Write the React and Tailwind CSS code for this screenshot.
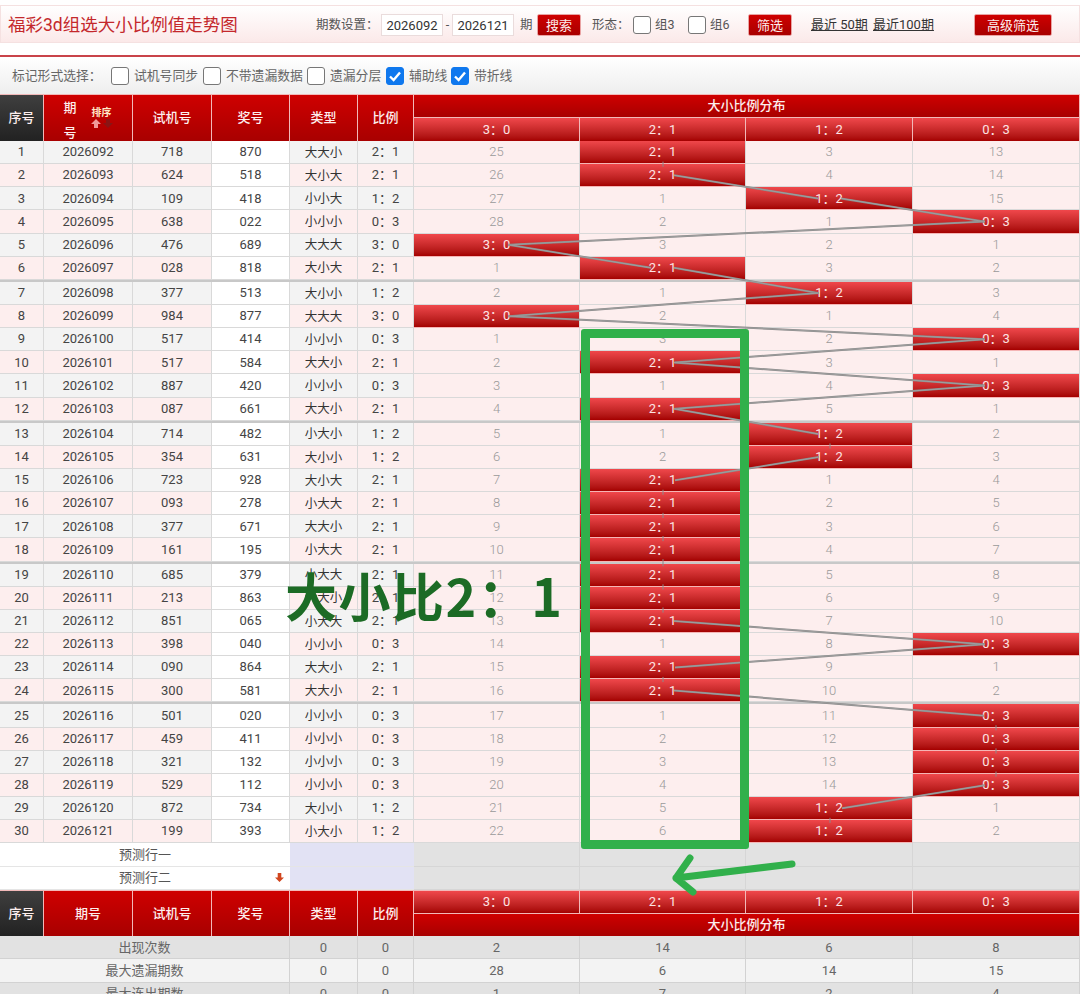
import React from "react";

const cols = "grid grid-cols-[44px_89px_79px_78px_68px_56px_166px_166px_167px_167px]";
const font = "font-['Roboto','Noto_Sans_CJK_SC',sans-serif]";

const raw = [
  ["718","870","大大小",1,[25,0,3,13]],
  ["624","518","大小大",1,[26,0,4,14]],
  ["109","418","小小大",2,[27,1,0,15]],
  ["638","022","小小小",3,[28,2,1,0]],
  ["476","689","大大大",0,[0,3,2,1]],
  ["028","818","大小大",1,[1,0,3,2]],
  ["377","513","大小小",2,[2,1,0,3]],
  ["984","877","大大大",0,[0,2,1,4]],
  ["517","414","小小小",3,[1,3,2,0]],
  ["517","584","大大小",1,[2,0,3,1]],
  ["887","420","小小小",3,[3,1,4,0]],
  ["087","661","大大小",1,[4,0,5,1]],
  ["714","482","小大小",2,[5,1,0,2]],
  ["354","631","大小小",2,[6,2,0,3]],
  ["723","928","大小大",1,[7,0,1,4]],
  ["093","278","小大大",1,[8,0,2,5]],
  ["377","671","大大小",1,[9,0,3,6]],
  ["161","195","小大大",1,[10,0,4,7]],
  ["685","379","小大大",1,[11,0,5,8]],
  ["213","863","大大小",1,[12,0,6,9]],
  ["851","065","小大大",1,[13,0,7,10]],
  ["398","040","小小小",3,[14,1,8,0]],
  ["090","864","大大小",1,[15,0,9,1]],
  ["300","581","大大小",1,[16,0,10,2]],
  ["501","020","小小小",3,[17,1,11,0]],
  ["459","411","小小小",3,[18,2,12,0]],
  ["321","132","小小小",3,[19,3,13,0]],
  ["529","112","小小小",3,[20,4,14,0]],
  ["872","734","大小小",2,[21,5,0,1]],
  ["199","393","小大小",2,[22,6,0,2]],
];
const ratios = ["3：0", "2：1", "1：2", "0：3"];
const colX = [497, 663, 830, 996];
const rowY = (i) => 152.6 + 23.15 * i + 2 * Math.floor(i / 6);

const segments = raw.slice(1).map((r, idx) => {
  const a = raw[idx][3], b = r[3];
  const y1 = rowY(idx), y2 = rowY(idx + 1);
  if (a === b) return { p: [colX[a], y1 + 9, colX[b], y2 - 9], tick: true };
  const dir = b > a ? 1 : -1;
  return { p: [colX[a] + 11 * dir, y1 - 0.5, colX[b] - 12 * dir, y2 - 0.5], tick: false };
});

const redGrad = "bg-gradient-to-b from-[#f0474b] to-[#a40000]";
const hdrGrad = "bg-gradient-to-b from-[#cf0000] to-[#a80000]";
const hdrText = "flex items-center justify-center text-[13px] font-medium text-[#fdeeee] border-r border-[#f2b9b9]";

function Check({ on }) {
  return (
    <span className="relative inline-flex w-[18px] h-[18px] shrink-0">
      <input type="checkbox" readOnly checked={on} className="appearance-none w-[18px] h-[18px] rounded-[3px] border border-[#777] bg-white checked:bg-[#0f78ee] checked:border-[#0f78ee]" />
      {on && (
        <svg viewBox="0 0 18 18" className="absolute inset-0 w-[18px] h-[18px] pointer-events-none">
          <path d="M4 9.5 L7.6 13 L14 5.5" fill="none" stroke="#fff" strokeWidth="2.4" />
        </svg>
      )}
    </span>
  );
}

function Btn({ children, w }) {
  return (
    <button className={`h-[22px] ${w} rounded-[2px] border border-[#e9a3a3] ${hdrGrad} text-[#fdeeee] text-[13px] leading-none`}>{children}</button>
  );
}

function Input({ v }) {
  return (
    <input readOnly value={v} className="w-[62px] h-[22px] border border-[#eadcdc] bg-white text-center text-[13px] text-[#333]" />
  );
}

function Toolbar() {
  return (
    <div className="mt-[5px] h-[38px] pt-[2px] flex items-center border border-[#f5e1e1] bg-gradient-to-b from-white to-[#fbe9e9] text-[12.5px] text-[#555]">
      <h1 className="w-[315px] pl-[7px] text-[17.5px] font-normal text-[#c4282c]">福彩3d组选大小比例值走势图</h1>
      <span className="w-[65px]">期数设置：</span>
      <Input v="2026092" />
      <span className="w-[9px] text-center">-</span>
      <Input v="2026121" />
      <span className="ml-[6px] w-[17px]">期</span>
      <Btn w="w-[44px]">搜索</Btn>
      <span className="ml-[11px] w-[41px]">形态：</span>
      <Check on={false} />
      <span className="ml-[4px] w-[33px]">组3</span>
      <Check on={false} />
      <span className="ml-[4px] w-[38px]">组6</span>
      <Btn w="w-[44px]">筛选</Btn>
      <a className="ml-[19px] w-[62px] underline text-[13px] text-[#333]">最近 50期</a>
      <a className="w-[101px] underline text-[13px] text-[#333]">最近100期</a>
      <Btn w="w-[78px]">高级筛选</Btn>
    </div>
  );
}

function Marker() {
  const items = [
    ["试机号同步", false, "ml-[11px]", "w-[69px]"],
    ["不带遗漏数据", false, "", "w-[81px]"],
    ["遗漏分层", false, "", "w-[56px]"],
    ["辅助线", true, "", "w-[42px]"],
    ["带折线", true, "", "w-[42px]"],
  ];
  return (
    <div className="h-[39px] mt-[12px] border-t-[2px] border-[#c9434a] flex items-center pl-[12px] bg-gradient-to-b from-white to-[#eeeeee] text-[12.8px] text-[#666]">
      <span className="w-[88px] whitespace-nowrap">标记形式选择：</span>
      {items.map(([t, on, ml, w]) => (
        <span key={t} className={`flex items-center ${ml}`}>
          <Check on={on} />
          <span className={`ml-[5px] whitespace-nowrap ${w}`}>{t}</span>
        </span>
      ))}
    </div>
  );
}

function SortArrows() {
  return (
    <svg viewBox="0 0 24 10" className="w-[24px] h-[10px]">
      <path d="M6 0 L11 5 H8 V9 H4 V5 H1 Z" fill="#f09a9a" />
      <path d="M18 9 L13 4 H16 V0 H20 V4 H23 Z" fill="#8a1414" />
    </svg>
  );
}

function TopHeader() {
  return (
    <div className={`${cols} grid-rows-[23px_23px] border-t border-[#f2b9b9]`}>
      <div className={`row-span-2 ${hdrText} bg-gradient-to-b from-[#3f3f3f] to-[#222222]`}>序号</div>
      <div className={`row-span-2 ${hdrText} ${hdrGrad} gap-[12px] pl-[1px]`}>
        <span className="flex flex-col leading-[25px] w-[14px] pt-[3px]">
          <span>期</span><span>号</span>
        </span>
        <span className="flex flex-col items-center w-[24px]">
          <span className="text-[10px] font-bold leading-[12px] text-[#ffe9c9]">排序</span>
          <SortArrows />
        </span>
      </div>
      <div className={`row-span-2 ${hdrText} ${hdrGrad}`}>试机号</div>
      <div className={`row-span-2 ${hdrText} ${hdrGrad}`}>奖号</div>
      <div className={`row-span-2 ${hdrText} ${hdrGrad}`}>类型</div>
      <div className={`row-span-2 ${hdrText} ${hdrGrad}`}>比例</div>
      <div className={`col-span-4 ${hdrText} ${hdrGrad} border-b`}>大小比例分布</div>
      {ratios.map((r) => (
        <div key={r} className={`flex items-center justify-center text-[13px] text-[#fde3e3] border-r border-[#f2b9b9] ${redGrad}`}>{r}</div>
      ))}
    </div>
  );
}

function BottomHeader() {
  return (
    <div className={`${cols} grid-rows-[23px_22px] border-t border-[#f2b9b9]`}>
      <div className={`row-span-2 ${hdrText} bg-gradient-to-b from-[#3f3f3f] to-[#222222]`}>序号</div>
      <div className={`row-span-2 ${hdrText} ${hdrGrad}`}>期号</div>
      <div className={`row-span-2 ${hdrText} ${hdrGrad}`}>试机号</div>
      <div className={`row-span-2 ${hdrText} ${hdrGrad}`}>奖号</div>
      <div className={`row-span-2 ${hdrText} ${hdrGrad}`}>类型</div>
      <div className={`row-span-2 ${hdrText} ${hdrGrad}`}>比例</div>
      {ratios.map((r) => (
        <div key={r} className={`flex items-center justify-center text-[13px] text-[#fde3e3] border-r border-b border-[#f2b9b9] ${redGrad}`}>{r}</div>
      ))}
      <div className={`col-span-4 ${hdrText} ${hdrGrad}`}>大小比例分布</div>
    </div>
  );
}

function Row({ r, i }) {
  const tint = i % 2 === 0 ? "bg-[#f3f3f3]" : "bg-[#fdeeee]";
  const c = "flex items-center justify-center border-r border-b border-[#d9d9d9]";
  return (
    <div className={`${cols} h-[23.15px] text-[13px] text-[#444]`}>
      <div className={`${c} ${tint}`}>{i + 1}</div>
      <div className={`${c} ${tint}`}>{2026092 + i}</div>
      <div className={`${c} ${tint}`}>{r[0]}</div>
      <div className={`${c} bg-white`}>{r[1]}</div>
      <div className={`${c} ${tint} pt-[2px] text-[12.5px] text-[#333]`}>{r[2]}</div>
      <div className={`${c} ${tint}`}>{ratios[r[3]]}</div>
      {r[4].map((n, k) =>
        k === r[3] ? (
          <div key={k} className={`flex items-center justify-center border-r border-b border-r-[#d9d9d9] border-b-[#f5b5b5] ${redGrad} text-[#fde3e3]`}>{ratios[k]}</div>
        ) : (
          <div key={k} className={`${c} bg-[#fdeeee] text-[#999999] font-light`}>{n}</div>
        )
      )}
    </div>
  );
}

function Pred({ label, arrow }) {
  const c = "border-r border-b border-[#d6d6d6]";
  return (
    <div className="grid grid-cols-[290px_124px_166px_166px_167px_167px] h-[23.5px] text-[13px] text-[#555]">
      <div className="relative flex items-center justify-center bg-white border-b border-[#e5e5e5]">
        {label}
        {arrow && (
          <svg viewBox="0 0 10 10" className="absolute right-[6px] top-[6px] w-[9px] h-[9px]">
            <path d="M5 10 L0 5 H3 V0 H7 V5 H10 Z" fill="#d1451e" />
          </svg>
        )}
      </div>
      <div className="bg-[#e2e2f4] border-b border-[#e5e5e5]" />
      <div className={`bg-[#e2e2e2] ${c}`} />
      <div className={`bg-[#e2e2e2] ${c}`} />
      <div className={`bg-[#e2e2e2] ${c}`} />
      <div className={`bg-[#e2e2e2] ${c}`} />
    </div>
  );
}

function Stat({ label, vals, bg }) {
  const c = "flex items-center justify-center border-r border-b border-[#d2d2d2]";
  return (
    <div className={`grid grid-cols-[290px_68px_56px_166px_166px_167px_167px] h-[23.2px] text-[13px] text-[#666] ${bg}`}>
      <div className={c}>{label}</div>
      {vals.map((v, k) => (
        <div key={k} className={c}>{v}</div>
      ))}
    </div>
  );
}

export default function App() {
  const groups = [0, 6, 12, 18, 24];
  return (
    <div className={`relative w-[1080px] h-[994px] overflow-hidden bg-white ${font}`}>
      <Toolbar />
      <Marker />
      <TopHeader />
      <div>
        {groups.map((g) => (
          <div key={g} className={g < 24 ? "border-b-[2px] border-[#c8c8c8]" : ""}>
            {raw.slice(g, g + 6).map((r, k) => (
              <Row key={k} r={r} i={g + k} />
            ))}
          </div>
        ))}
      </div>
      <Pred label="预测行一" />
      <Pred label="预测行二" arrow />
      <BottomHeader />
      <Stat label="出现次数" vals={[0, 0, 2, 14, 6, 8]} bg="bg-[#e2e2e2]" />
      <Stat label="最大遗漏期数" vals={[0, 0, 28, 6, 14, 15]} bg="bg-[#f3f3f3]" />
      <Stat label="最大连出期数" vals={[0, 0, 1, 7, 2, 4]} bg="bg-[#e2e2e2]" />

      {/* trend polyline drawn over the table */}
      <svg className="absolute left-0 top-0 w-[1080px] h-[994px] pointer-events-none" viewBox="0 0 1080 994">
        {segments.map((s, i) => (
          <g key={i}>
            <line x1={s.p[0]} y1={s.p[1]} x2={s.p[2]} y2={s.p[3]} stroke="#8a8a8a" strokeWidth={s.tick ? 1 : 2} />
            {!s.tick && <line x1={s.p[0]} y1={s.p[1]} x2={s.p[2]} y2={s.p[3]} stroke="#a8a8a8" strokeWidth="0.7" />}
          </g>
        ))}
      </svg>

      {/* annotation painted on the screenshot */}
      <div className="absolute left-[581px] top-[329px] w-[168px] h-[520px] border-[9px] border-[#31b04b] rounded-[3px]" />
      <svg className="absolute left-0 top-0 w-[1080px] h-[994px] pointer-events-none" viewBox="0 0 1080 994">
        <path d="M792 864 L676 878 M690 858 L676 878 L693 892" fill="none" stroke="#31b04b" strokeWidth="7" strokeLinecap="round" strokeLinejoin="round" />
      </svg>
      <div className="absolute left-[285px] top-[563px] whitespace-nowrap text-[52px] leading-[64px] font-bold tracking-[1.5px] text-[#1c6b25] font-['Noto_Sans_CJK_SC',sans-serif]">
        大小比2：1
      </div>
    </div>
  );
}
